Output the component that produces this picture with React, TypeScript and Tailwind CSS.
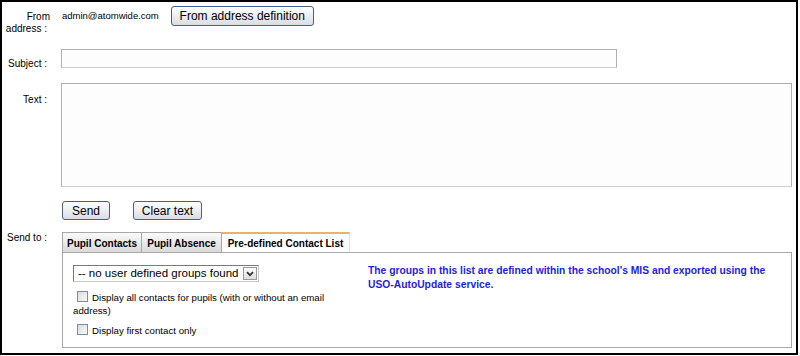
import React from "react";

const btn =
  "h-[19px] rounded-[3px] border border-[#4a5e82] bg-linear-to-b from-white to-[#d9dde5] text-[12px] leading-none text-black flex items-center justify-center";

const Checkbox: React.FC = () => (
  <span className="inline-block w-[11px] h-[11px] ml-[4px] mr-[4px] align-[-1px] border border-[#7c8ca4] bg-linear-to-br from-[#dcdcdc] to-[#f8f8f8]" />
);

export default function App() {
  return (
    <div className="w-[798px] h-[355px] border-2 border-black bg-white font-['Liberation_Sans',Arial,sans-serif] text-black">
      {/* From address */}
      <div className="flex items-start mt-[4px] h-[20px]">
        <div className="w-[48px] text-right text-[10px] leading-[11.5px] pt-[5px]">
          <div>From</div>
          <div className="pr-[3px]">address :</div>
        </div>
        <div className="ml-[11px] flex items-center h-[20px]">
          <span className="ml-[1px] text-[9.5px]">admin@atomwide.com</span>
          <button className={`${btn} h-[20px] w-[143px] ml-[12px]`}>
            From address definition
          </button>
        </div>
      </div>

      {/* Subject */}
      <div className="flex items-start mt-[23px] h-[19px]">
        <div className="w-[48px] text-right text-[10px] leading-[11.5px] pr-[3px] pt-[9px]">
          Subject :
        </div>
        <div className="ml-[11px] w-[556px] h-[19px] border border-[#b0b0b0] border-b-[#cfcfcf] bg-[#fdfdfd]" />
      </div>

      {/* Text */}
      <div className="flex items-start mt-[15px]">
        <div className="w-[48px] text-right text-[10px] leading-[11.5px] pr-[3px] pt-[11px]">
          Text :
        </div>
        <div className="ml-[11px] w-[731px] h-[104px] border border-[#b0b0b0] border-b-[#cfcfcf] bg-[#fdfdfd]" />
      </div>

      {/* Buttons */}
      <div className="flex mt-[14px] ml-[60px] gap-[23px]">
        <button className={`${btn} w-[48px]`}>Send</button>
        <button className={`${btn} w-[69px]`}>Clear text</button>
      </div>

      {/* Send to */}
      <div className="flex items-start mt-[12px]">
        <div className="w-[48px] text-right text-[10px] leading-[11.5px] pr-[3px]">
          Send to :
        </div>
        <div className="ml-[12px] w-[730px]">
          <div className="flex h-[20px] text-[10px] font-bold">
            <div className="w-[80px] flex items-center justify-center pt-[1px] border border-b-0 border-[#a8a8a8] bg-linear-to-b from-[#fafafa] to-[#dadada]">
              Pupil Contacts
            </div>
            <div className="w-[80px] flex items-center justify-center pt-[1px] border border-b-0 border-l-0 border-[#a8a8a8] bg-linear-to-b from-[#fafafa] to-[#dadada]">
              Pupil Absence
            </div>
            <div className="w-[128px] flex items-center justify-center pt-[1px] border-t-2 border-t-[#f2b061] border-r border-r-[#e2e2e2] bg-white">
              Pre-defined Contact List
            </div>
          </div>
          <div className="h-[96px] border border-[#a8a8a8] flex pt-[11px] pl-[10px]">
            <div className="w-[287px] text-[9.7px] leading-[13px]">
              <div className="mt-[1px] w-[186px] h-[17px] flex items-center border border-[#7a7a7a] border-r-[#c8c8c8] border-b-[#c8c8c8] bg-white">
                <span className="flex-1 pl-[4px] text-[11.5px] leading-none whitespace-nowrap">
                  -- no user defined groups found
                </span>
                <span className="w-[14px] h-[13px] mr-[1px] flex items-center justify-center border border-[#9a9a9a] bg-linear-to-b from-white to-[#dedede]">
                  <svg width="8" height="6" viewBox="0 0 8 6">
                    <path d="M1 1.2 L4 4.2 L7 1.2" fill="none" stroke="#333" strokeWidth="1.8" />
                  </svg>
                </span>
              </div>
              <div className="mt-[9px]">
                <Checkbox />
                Display all contacts for pupils (with or without an email address)
              </div>
              <div className="mt-[7px]">
                <Checkbox />
                Display first contact only
              </div>
            </div>
            <div className="ml-[8px] w-[420px] text-[10.3px] leading-[13.5px] font-bold text-[#1d1de6]">
              The groups in this list are defined within the school's MIS and exported using the USO-AutoUpdate service.
            </div>
          </div>
        </div>
      </div>
    </div>
  );
}
